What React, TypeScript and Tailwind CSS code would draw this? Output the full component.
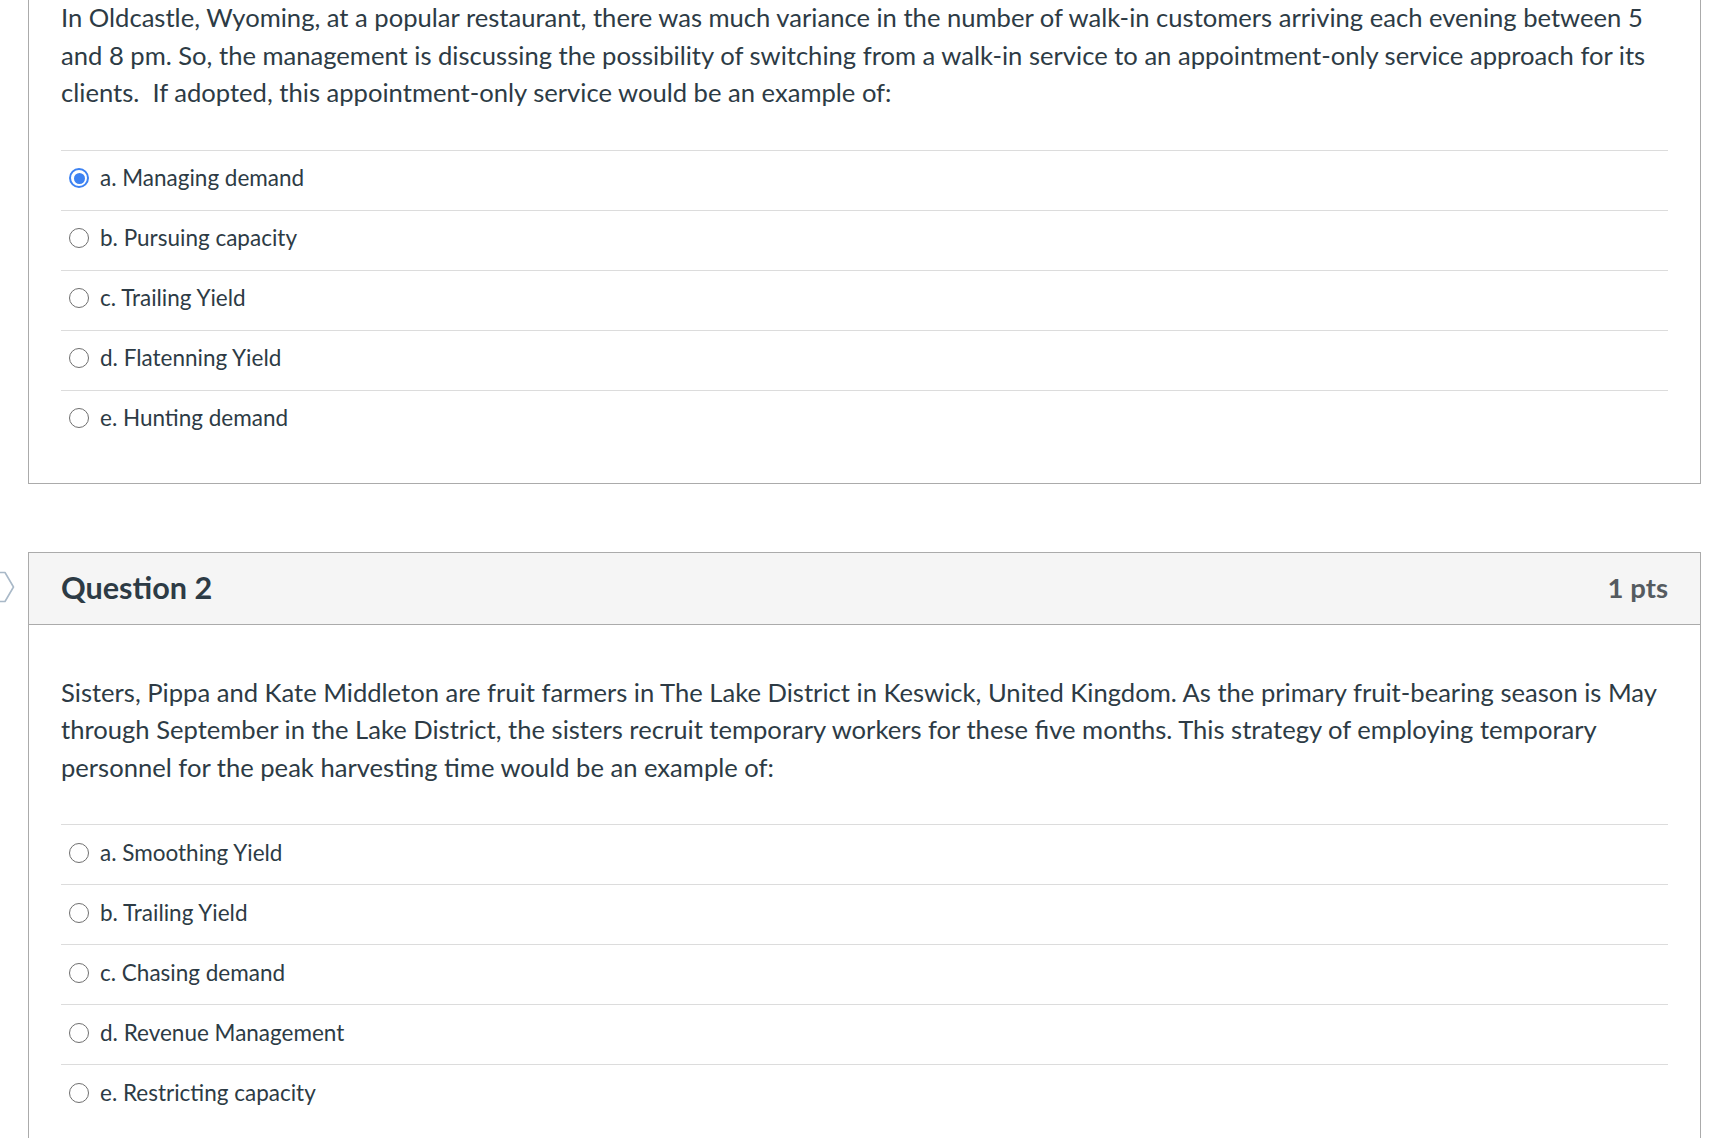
import React from "react";

const q1Options = [
  "a. Managing demand",
  "b. Pursuing capacity",
  "c. Trailing Yield",
  "d. Flatenning Yield",
  "e. Hunting demand",
];

const q2Options = [
  "a. Smoothing Yield",
  "b. Trailing Yield",
  "c. Chasing demand",
  "d. Revenue Management",
  "e. Restricting capacity",
];

function Radio({ checked }: { checked?: boolean }) {
  if (checked) {
    return (
      <span className="flex h-[20px] w-[20px] shrink-0 items-center justify-center rounded-full border-2 border-[#3d82f2] bg-white">
        <span className="h-[11px] w-[11px] rounded-full bg-[#3d82f2]" />
      </span>
    );
  }
  return (
    <span className="h-[20px] w-[20px] shrink-0 rounded-full border-[1.5px] border-[#6f6f6f] bg-white" />
  );
}

function Options({ items, checkedIndex }: { items: string[]; checkedIndex?: number }) {
  return (
    <div className="flex flex-col">
      {items.map((t, i) => (
        <div
          key={t}
          className="flex h-[60px] items-center border-t border-[#dcdcdc] pb-[4px] pl-[8px]"
        >
          <Radio checked={i === checkedIndex} />
          <span className="ml-[11px] text-[22.5px] leading-[30px] text-[#2d3b45]">{t}</span>
        </div>
      ))}
    </div>
  );
}

export default function App() {
  return (
    <div className="relative min-h-[1138px] overflow-hidden bg-white font-['Lato','Noto_Sans',sans-serif] text-[#2d3b45]">
      <svg
        className="absolute left-0 top-[571px]"
        width="16"
        height="32"
        viewBox="0 0 16 32"
        fill="none"
      >
        <path
          d="M-10 1.5 H5 L13.5 16 L5 30.5 H-10"
          stroke="#a9b9c8"
          strokeWidth="1.6"
          strokeLinejoin="round"
        />
      </svg>

      <div className="ml-[28px] w-[1673px]">
        {/* Question 1 (scrolled) */}
        <div className="border-x border-b border-[#ababab] px-[32px] pb-[33px]">
          <p className="-mt-[1px] text-[25.6px] leading-[37.5px]">
            In Oldcastle, Wyoming, at a popular restaurant, there was much variance in the number of walk-in
            customers arriving each evening between 5 and 8 pm. So, the management is discussing the possibility of
            switching from a walk-in service to an appointment-only service approach for its clients.&nbsp; If
            adopted, this appointment-only service would be an example of:
          </p>
          <div className="mt-[38px]">
            <Options items={q1Options} checkedIndex={0} />
          </div>
        </div>

        {/* Question 2 */}
        <div className="mt-[68px] border border-[#ababab]">
          <div className="flex h-[72px] items-center justify-between border-b border-[#ababab] bg-[#f5f5f5] px-[32px]">
            <h2 className="text-[30.6px] font-bold leading-none text-[#2d3b45]">Question 2</h2>
            <span className="text-[27.5px] font-bold leading-none text-[#555b60]">1 pts</span>
          </div>
          <div className="px-[32px] pb-[60px] pt-[49px]">
            <p className="text-[25.6px] leading-[37.5px]">
              Sisters, Pippa and Kate Middleton are fruit farmers in The Lake District in Keswick, United Kingdom. As
              the primary fruit-bearing season is May through September in the Lake District, the sisters recruit
              temporary workers for these five months. This strategy of employing temporary personnel for the peak
              harvesting time would be an example of:
            </p>
            <div className="mt-[38px]">
              <Options items={q2Options} />
            </div>
          </div>
        </div>
      </div>
    </div>
  );
}
